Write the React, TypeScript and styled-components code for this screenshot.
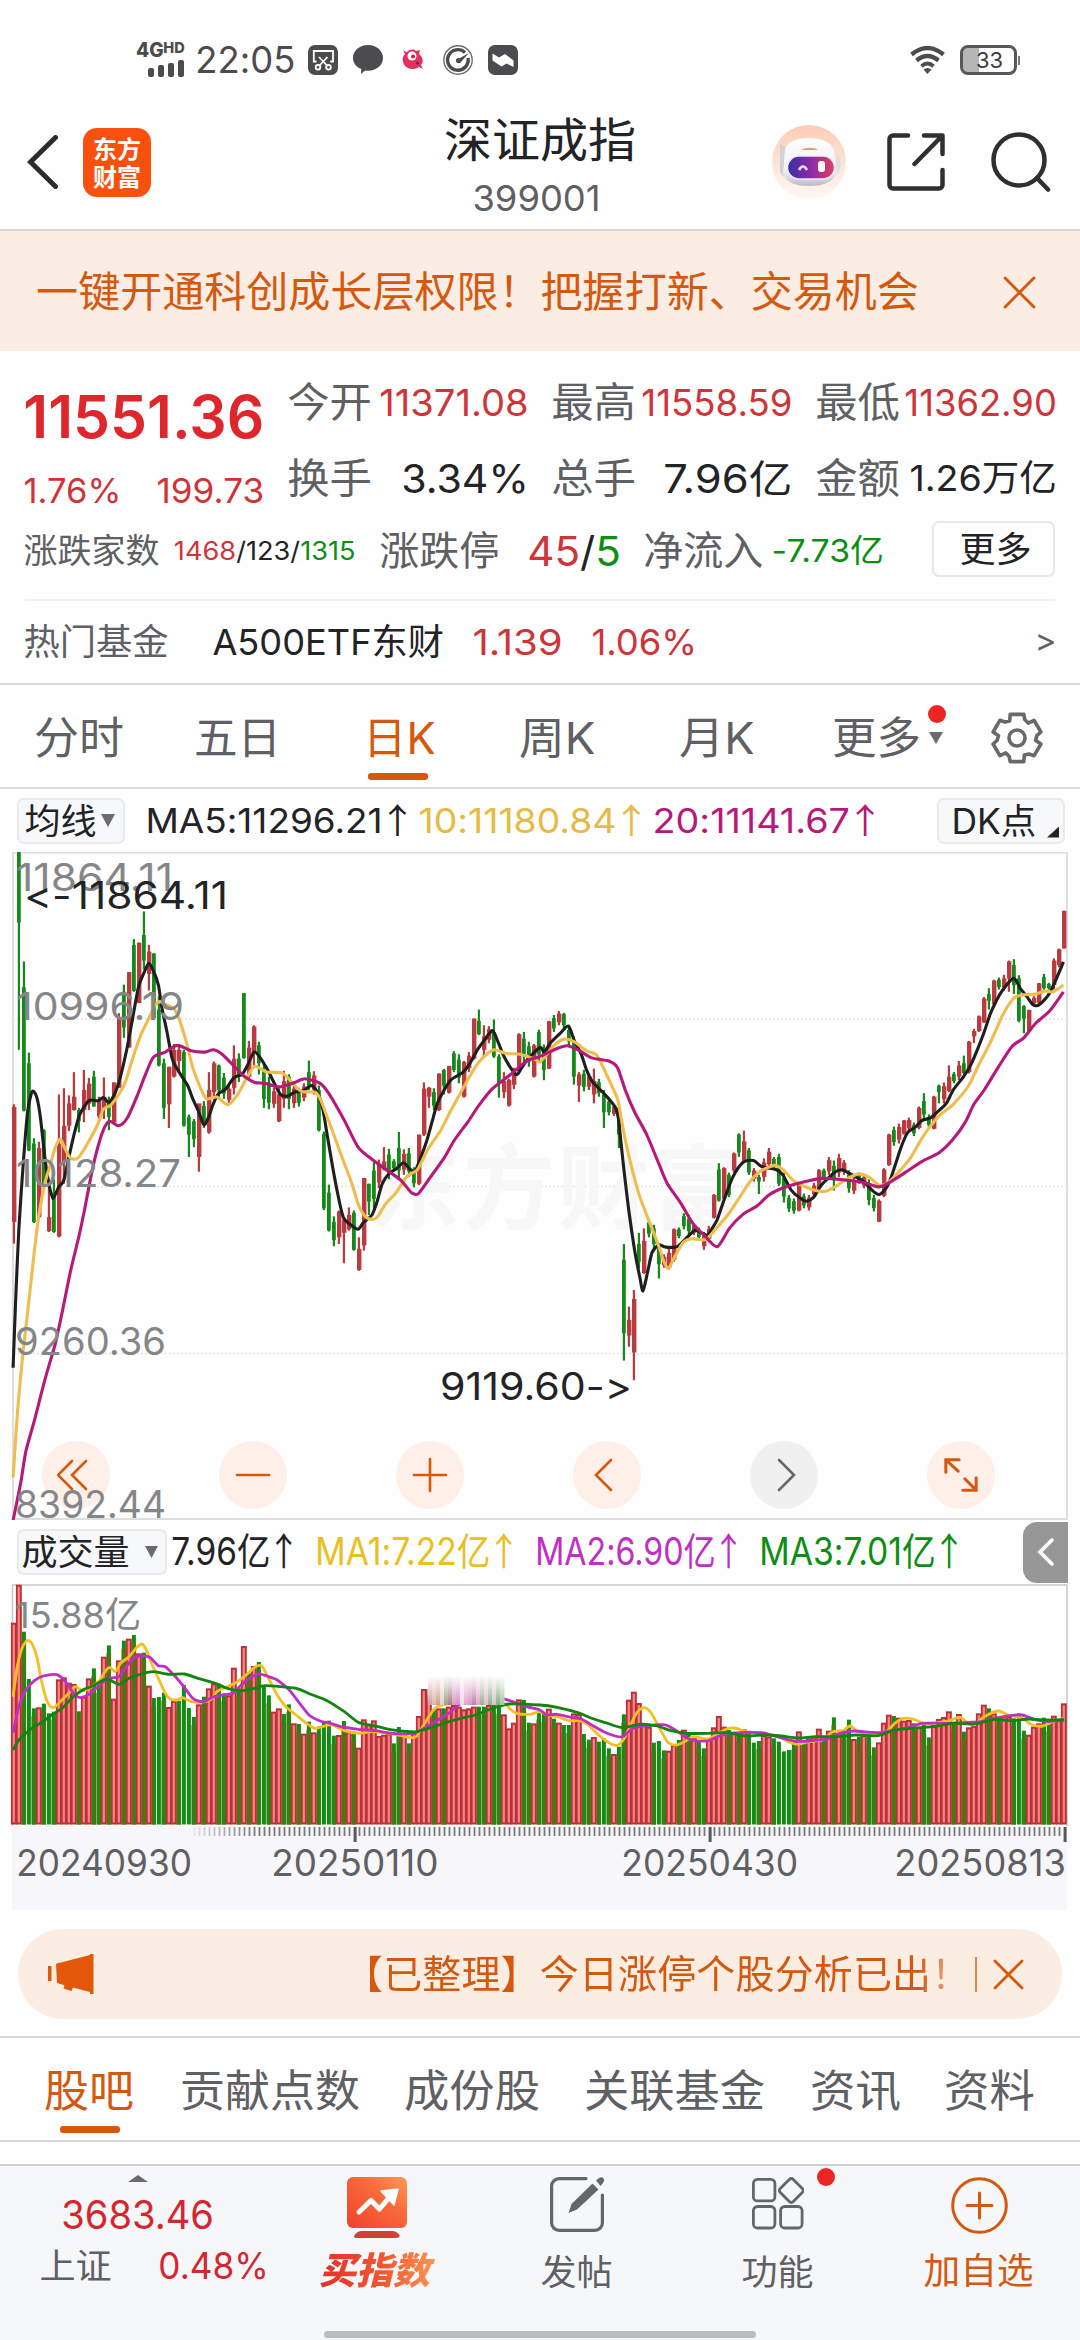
import React, { useLayoutEffect, useRef, useState } from "react";
import styled, { createGlobalStyle, css } from "styled-components";

const INK = "#222326";
const GREY = "#5f6063";
const RED = "#cf3438";
const GREEN = "#0b8f12";
const ORANGE = "#d4590f";
const FONT = `Inter, "Noto Sans CJK SC", sans-serif`;

const Global = createGlobalStyle`
  * { box-sizing: border-box; }
  html, body { margin: 0; padding: 0; background: #fefefe; }
  body { font-family: ${FONT}; color: ${INK}; font-feature-settings: "calt" 0, "liga" 0; }
  svg { display: block; flex: none; }
`;

/* ---------- text that keeps a set ink width ---------- */

const FitBox = styled.span<{ $w: number; $ml: number; $size: number; $color: string; $weight: number; $mt: number }>`
  display: block;
  flex: none;
  width: ${(p) => p.$w}px;
  margin-left: ${(p) => p.$ml}px;
  margin-top: ${(p) => p.$mt}px;
  font-size: ${(p) => p.$size}px;
  line-height: 1.2;
  font-weight: ${(p) => p.$weight};
  color: ${(p) => p.$color};
  white-space: pre;
`;
const FitInner = styled.span`
  display: inline-block;
  transform-origin: 0 50%;
`;
const Arrow = styled.span`
  display: inline-block;
  margin: 0 -0.24em 0 -0.1em;
  font-family: "Noto Sans CJK SC", sans-serif;
  line-height: 1;
`;

type FitProps = {
  w: number;
  size: number;
  ml?: number;
  mt?: number;
  color?: string;
  weight?: number;
  children: React.ReactNode;
};

function Fit({ w, size, ml = 0, mt = 0, color = INK, weight = 400, children }: FitProps) {
  const ref = useRef<HTMLSpanElement>(null);
  const [k, setK] = useState(1);
  const bearing = size * 0.045;
  useLayoutEffect(() => {
    if (ref.current) setK((w + bearing * 2) / ref.current.offsetWidth);
  }, [w, bearing]);
  return (
    <FitBox $w={w} $ml={ml} $mt={mt} $size={size} $color={color} $weight={weight}>
      <FitInner ref={ref} style={{ transform: `translateX(${-bearing}px) scaleX(${k})` }}>
        {children}
      </FitInner>
    </FitBox>
  );
}

/* ---------- layout ---------- */

const Page = styled.div`
  width: 1080px;
  height: 2340px;
  overflow: hidden;
  background: #fefefe;
  display: flex;
  flex-direction: column;
`;

const StatusBar = styled.div`
  height: 104px;
  padding: 16px 60px 0 136px;
  display: flex;
  align-items: center;
  flex: none;
`;
const Spacer = styled.div`
  flex: 1;
`;
const Signal = styled.div`
  width: 48px;
  display: flex;
  flex-direction: column;
  align-items: flex-end;
`;
const SignalLabel = styled.div`
  display: flex;
  align-items: flex-start;
  height: 15px;
  margin-bottom: 2px;
`;
const StatusIcons = styled.div`
  display: flex;
  align-items: center;
  gap: 15px;
  margin-left: 14px;
`;
const Battery = styled.div`
  width: 57px;
  height: 30px;
  margin-left: 15px;
  margin-right: 3px;
  border: 3px solid #56575a;
  border-radius: 8px;
  background: linear-gradient(90deg, #b5b5b6 0 16px, #fefefe 16px);
  background-clip: padding-box;
  display: flex;
  align-items: center;
  position: relative;
  &::after {
    content: "";
    position: absolute;
    right: -6px;
    top: 8px;
    width: 2px;
    height: 9px;
    background: #77787a;
  }
`;

const Header = styled.header`
  height: 127px;
  padding: 0 28px 9px 27px;
  border-bottom: 2px solid #d6d6d6;
  display: flex;
  align-items: center;
  flex: none;
`;
const Logo = styled.div`
  width: 68px;
  height: 69px;
  margin-left: 25px;
  border-radius: 14px;
  background: #f9500d;
  color: #fff;
  font: 700 24px/28px "Noto Sans CJK SC", sans-serif;
  text-align: center;
  white-space: pre-line;
  padding: 6px 0;
`;
const Title = styled.div`
  width: 188px;
  margin: 14px 0 0 295px;
  display: flex;
  flex-direction: column;
`;
const TitleLine = styled.div`
  height: 57px;
  display: flex;
  align-items: center;
`;
const IconSlot = styled.div<{ $ml: number }>`
  margin-left: ${(p) => p.$ml}px;
`;

const Banner = styled.div`
  height: 120px;
  padding: 2px 44px 0 38px;
  background: #fbede3;
  display: flex;
  align-items: center;
  justify-content: space-between;
  flex: none;
`;

const Quote = styled.section`
  height: 334px;
  padding: 21px 25px 0;
  border-bottom: 2px solid #d9d9d9;
  display: flex;
  flex-direction: column;
  flex: none;
`;
const QuoteTop = styled.div`
  display: flex;
  height: 140px;
`;
const PriceCol = styled.div`
  width: 264px;
  padding-top: 5px;
`;
const Stats = styled.div`
  padding-top: 1px;
`;
const Line = styled.div<{ $h: number; $gap?: number }>`
  height: ${(p) => p.$h}px;
  margin-bottom: ${(p) => p.$gap ?? 0}px;
  display: flex;
  align-items: center;
`;
const Breadth = styled.div`
  height: 56px;
  margin-top: 12px;
  display: flex;
  align-items: center;
`;
const MoreButton = styled.button`
  width: 123px;
  height: 56px;
  margin: 0 0 4px auto;
  padding: 0 0 0 27px;
  border: 2px solid #e8e8e9;
  border-radius: 7px;
  background: #fefefe;
  font-family: inherit;
  display: flex;
  align-items: center;
  text-align: left;
`;
const FundRow = styled.div`
  height: 84px;
  margin-top: 20px;
  border-top: 2px solid #f2f2f2;
  display: flex;
  align-items: center;
`;

const Tabs = styled.nav`
  height: 104px;
  padding-top: 4px;
  border-bottom: 2px solid #dcdcdc;
  display: flex;
  align-items: center;
  flex: none;
`;
const Tab = styled.div<{ $ml: number; $active?: boolean; $barLeft?: number }>`
  margin-left: ${(p) => p.$ml}px;
  position: relative;
  ${(p) =>
    p.$active &&
    css`
      &::after {
        content: "";
        position: absolute;
        left: ${p.$barLeft}px;
        top: 61px;
        width: 60px;
        height: 7px;
        border-radius: 3px;
        background: ${ORANGE};
      }
    `}
`;
const Dot = styled.i`
  position: absolute;
  width: 18px;
  height: 18px;
  border-radius: 50%;
  background: #eb2522;
`;
const TabDot = styled(Dot)`
  right: -27px;
  top: -7px;
`;
const Caret = styled.i<{ $w: number; $h: number; $ml?: number; $up?: boolean }>`
  display: block;
  flex: none;
  width: ${(p) => p.$w}px;
  height: ${(p) => p.$h}px;
  margin-left: ${(p) => p.$ml ?? 0}px;
  background: #6b6b6d;
  clip-path: ${(p) => (p.$up ? "polygon(50% 0, 100% 100%, 0 100%)" : "polygon(0 0, 100% 0, 50% 100%)")};
`;

const Legend = styled.div<{ $h: number }>`
  height: ${(p) => p.$h}px;
  padding: 0 12px 0 17px;
  display: flex;
  align-items: center;
  flex: none;
`;
const Chip = styled.div<{ $w: number; $pl: number }>`
  width: ${(p) => p.$w}px;
  height: 46px;
  padding-left: ${(p) => p.$pl}px;
  border: 2px solid #e9eaeb;
  border-radius: 7px;
  background: #f7f8f9;
  display: flex;
  align-items: center;
  flex: none;
  position: relative;
`;
const Corner = styled.i`
  position: absolute;
  right: 4px;
  bottom: 4px;
  width: 12px;
  height: 11px;
  background: #222;
  clip-path: polygon(100% 0, 100% 100%, 0 100%);
`;
const ChipWrap = styled.div`
  margin-left: auto;
  margin-right: 3px;
`;
const Collapse = styled.div`
  width: 45px;
  height: 61px;
  margin-left: auto;
  border-radius: 14px 0 0 14px;
  background: #979797;
  display: flex;
  align-items: center;
  justify-content: center;
`;

const KPanel = styled.section`
  height: 668px;
  position: relative;
  flex: none;
`;
const Controls = styled.div`
  position: absolute;
  left: 42px;
  bottom: 11px;
  display: flex;
  gap: 109px;
`;
const Round = styled.div<{ $grey?: boolean }>`
  width: 68px;
  height: 68px;
  border-radius: 50%;
  background: ${(p) => (p.$grey ? "rgba(236,236,237,.8)" : "rgba(254,236,227,.82)")};
  display: flex;
  align-items: center;
  justify-content: center;
`;
const Labels = styled.svg`
  position: absolute;
  left: 0;
  top: 0;
`;
const Axis = styled.div`
  width: 1055px;
  height: 84px;
  margin-left: 12px;
  background: #f7f7fa;
  flex: none;
`;
const Dates = styled.div`
  height: 40px;
  padding-left: 6px;
  display: flex;
  align-items: center;
`;

const Notice = styled.div`
  width: 1044px;
  height: 90px;
  margin: 19px 0 17px 18px;
  padding: 0 38px 0 30px;
  border-radius: 45px;
  background: #fcede3;
  display: flex;
  align-items: center;
  flex: none;
`;
const NoticeText = styled.div`
  width: 604px;
  margin-left: 250px;
  overflow: hidden;
  -webkit-mask-image: linear-gradient(90deg, #000 0 575px, transparent 635px);
  mask-image: linear-gradient(90deg, #000 0 575px, transparent 635px);
  font-size: 39px;
  line-height: 52px;
  letter-spacing: 0.15px;
  white-space: nowrap;
  color: ${ORANGE};
`;
const NoticeRule = styled.i`
  width: 2px;
  height: 35px;
  margin: 0 16px 0 27px;
  background: #d98550;
`;
const LowerTabs = styled(Tabs)`
  height: 106px;
  border-top: 2px solid #d6d6d6;
  border-bottom-color: #d6d6d6;
`;

const BottomBar = styled.footer`
  height: 177px;
  margin-top: 22px;
  background: #f6f7f9;
  border-top: 2px solid #cfcfd2;
  display: grid;
  grid-template-columns: 279px 196px 204px 196px 205px;
  align-content: start;
  position: relative;
  flex: none;
`;
const IndexCell = styled.div`
  padding-top: 9px;
`;
const NavItem = styled.div<{ $pl: number }>`
  padding: 11px 0 0 ${(p) => p.$pl}px;
  position: relative;
`;
const NavIcon = styled.div<{ $ml: number }>`
  height: 64px;
  margin-left: ${(p) => p.$ml}px;
`;
const NavDot = styled(Dot)`
  left: 138px;
  top: 2px;
`;
const BuyLabel = styled.span`
  display: block;
  width: 124px;
  margin: 5px 0 0 -5px;
  padding: 0 4px;
  font: italic 900 37px/44px "Noto Sans CJK SC", sans-serif;
  white-space: nowrap;
  background: linear-gradient(90deg, #dd3029, #f5562f 55%, #fb9a58);
  -webkit-background-clip: text;
  background-clip: text;
  color: transparent;
`;
const HomeBar = styled.i`
  position: absolute;
  left: 324px;
  bottom: 3px;
  width: 432px;
  height: 7px;
  border-radius: 4px;
  background: #bbbcbd;
`;

/* ---------- chart data ---------- */

const N = 211;
const STEP = 5;
const X0 = 13.8;
const cx = (i: number) => X0 + i * STEP;
// readings are on a 2.904x horizontal grid
const GX = 2.904;
const py = (v: number) => 840 + v / 2.24;
const vy = (v: number) => 1570 + v / 3;

const CANDLES = `r592,904,598,856 g27,470,27,185 g272,608,330,606 g476,697,500,695 g668,858,680,856 r676,846,690,845 g648,780,650,770 r770,878,845,876 g760,880,790,878 r570,890,680,888 r556,770,640,720 r572,652,590,640 r520,606,575,605 g600,655,605,630 r515,632,560,605 r533,605 g517,597,530,597 r575,630 r532,625,575,600 g575,650,585,620 r543,633,543,633 r388,555,400,555 g324,443,340,420 r296,465,296,465 g222,340,235,338 r230,365,230,365 g160,290,213,270 r235,337,250,300 g254,400,254,400 g350,507,380,505 g490,625,500,600 r508,645,508,592 r457,532,470,530 r457,520,470,495 g470,642,475,640 g615,710,620,660 g625,688,630,670 r600,743,590,710 g585,645 r520,658,560,655 r496,575,500,565 g503,580,505,560 g522,580 r550,590 r460,570,490,555 g478,542 g343,490,343,488 r450,535,465,530 r415,505,418,475 g452,525,460,500 g500,600 g530,603 r555,600 r556,632,570,630 r517,600,540,580 g525,603,530,580 r548,600 g555,597 r545,585 g494,560,520,550 r518,570 g550,653,560,650 g653,829,658,825 g772,877,790,875 g843,910 r830,905,832,890 r850,948,850,880 r823,875,840,872 g830,920,835,918 r890,965,916,963 r757,920,757,908 g770,840,770,810 g722,825 r716,780 r688,740,720,738 g692,760 g715,740 g654,760,690,740 r693,750 g690,755 g733,778 r660,773,660,770 r543,663,557,660 r553,600,555,575 g556,605 r523,607,523,605 g513,570,515,550 r506,568,506,566 g473,520,478,515 g480,545 r495,577,497,575 r475,520 r400,492,400,490 g380,437,405,435 r415,485,440,470 r417,455 g402,488,430,485 g480,577,485,545 r520,578,540,565 r535,597,537,595 r510,558 r433,520,435,518 g430,500,445,480 g452,508 r457,532,460,530 g425,500,430,480 g458,538,465,515 r405,513,406,512 g392,430 r383,415 g387,425,390,415 g418,460 g440,548,450,530 r520,587,525,550 g515,563 r523,560 r512,590,540,570 g535,575 g560,645,570,610 g580,617 r593,618 g595,690,600,660 g905,1166,940,1105 r1045,1135,1075,1110 r1008,1210,1028,1148 g880,960,905,945 r870,972,898,970 g850,890 g862,920,870,905 g905,982,910,950 r928,958 r915,962,925,958 r870,945,872,940 g868,892 g836,872 g840,885 r858,885 g868,895 r878,918 r865,900 r793,848,795,846 g724,810,738,808 r733,805,735,803 g745,800,750,795 r700,745,702,740 g657,710,660,700 r651,720,675,718 g690,750,695,745 r735,765 g750,793,755,765 r713,765 r690,735 g710,735 g703,775,710,770 g745,812 g795,833 g803,837 r770,832,772,830 g792,825 r795,830 r768,800 r737,785,740,780 g736,760 r710,750 g718,785,730,760 r703,755 r717,750 g740,790 r755,793 g745,770 r750,780 g760,818 g795,832 r805,856,808,855 r735,800,738,797 r658,730,660,728 g642,685 r635,680 r627,660,628,658 r622,652 g633,663 r597,648,600,645 g567,630,585,615 g615,645 r573,648,575,647 g548,590,550,565 r543,590 r505,565,530,562 g520,545 r495,538,505,530 g483,525,500,522 r450,523,452,520 r423,455,428,440 r393,430,395,428 r352,410,355,408 g332,380,345,360 r313,370,315,368 g308,335 r302,338,310,330 r270,340,272,310 g267,345,280,325 g303,408,310,405 g370,433,372,400 r380,430,381,428 r350,370 r320,370,321,365 g300,340 g320,335 r265,335,270,325 r243,285,245,280 r158,243,159,243`
  .split(" ")
  .map((s) => {
    const v = s.slice(1).split(",").map(Number);
    const [h, l] = v;
    return { up: s[0] === "r", h, l, a: v[2] ?? h + (l - h) * 0.18, b: v[3] ?? l - (l - h) * 0.2 };
  });

const VOLUMES =
  `r158 r44 g185 g327 g415 r412 g401 g430 g425 r328 r322 r338 r342 g424 r380 r325 g295 g345 r260 g226 r386 r271 g212 r206 g195 r250 g248 r347 g384 g381 g368 r411 r393 g392 g345 g414 g441 r403 g380 r355 r340 g341 g370 r376 r293 g355 r228 g310 r288 g276 g345 g376 r425 r415 g432 g403 r460 g462 r491 g455 r487 g470 g455 g452 g497 r495 g453 r485 g485 r533 r448 r462 r451 r498 r494 r490 g520 g471 r490 g520 r490 r438 r357 r357 g420 r415 g415 r410 r405 r410 r418 r415 r410 g410 g410 r405 g405 g408 r433 r475 r458 r388 g390 g458 r460 g425 g432 r416 g446 r458 g465 g465 r430 r432 g492 g509 r501 g515 g505 g535 r552 g530 g433 r389 r365 r399 r460 r470 g518 g513 g541 r542 r525 g510 r479 g490 r500 g510 g535 r505 r472 r438 r470 g480 r485 g490 r478 g490 g518 g513 r495 r500 g505 g515 g544 g540 g515 r484 g510 r505 r500 r476 g500 r482 g442 r490 g485 g449 r507 g500 r495 g500 g532 r517 r458 r434 g438 r443 r452 r450 g460 r470 g465 g502 r465 r447 r441 r424 g455 r432 g485 r472 r468 r430 r404 g415 r430 g440 r445 r440 g445 g430 g482 r494 r470 r460 g443 g460 r437 r450 r400`
    .split(" ")
    .map((s) => ({ up: s[0] === "r", t: Number(s.slice(1)) }));

// "x,y" pairs; the part after "|" belongs to the right half of the panel
function curve(src: string, fy: (v: number) => number) {
  const [l, r = ""] = src.split("|");
  const read = (t: string, off: number) =>
    t
      .trim()
      .split(/\s+/)
      .filter(Boolean)
      .map((p) => {
        const [x, y] = p.split(",").map(Number);
        return [x / GX + off, fy(y)];
      });
  const pts = [...read(l, 0), ...read(r, 540)];
  let d = `M${pts[0][0].toFixed(1)} ${pts[0][1].toFixed(1)}`;
  for (let i = 0; i < pts.length - 1; i++) {
    const p0 = pts[i - 1] ?? pts[i];
    const p1 = pts[i];
    const p2 = pts[i + 1];
    const p3 = pts[i + 2] ?? p2;
    const c = [
      p1[0] + (p2[0] - p0[0]) / 8,
      p1[1] + (p2[1] - p0[1]) / 8,
      p2[0] - (p3[0] - p1[0]) / 8,
      p2[1] - (p3[1] - p1[1]) / 8,
      p2[0],
      p2[1],
    ].map((n) => n.toFixed(1));
    d += `C${c.join(" ")}`;
  }
  return d;
}

const MA5 =
  "38,1182 45,1040 55,870 68,720 80,610 90,570 97,563 108,580 118,625 130,710 142,770 154,803 170,778 185,763 200,710 215,660 230,618 245,597 260,583 285,584 300,577 317,588 335,565 350,530 368,470 385,400 402,330 418,298 432,276 445,292 460,325 470,375 485,430 500,490 520,520 545,550 560,580 575,605 592,638 605,622 620,590 635,568 655,558 680,532 703,525 720,503 738,475 755,487 775,512 800,550 815,570 835,574 855,565 880,562 905,550 925,570 938,605 950,660 965,728 980,790 997,845 1015,860 1040,872 1055,857 1080,840 1095,810 1110,770 1130,747 1150,737 1172,723 1190,737 1205,742 1220,715 1240,672 1255,630 1270,590 1290,560 1310,537 1345,520 1365,500 1385,472 1405,450 1430,427 1445,450 1465,487 1498,525 1515,510 1530,493 1568,465 | 12,475 30,455 60,432 83,417 100,450 120,480 135,515 152,541 180,563 200,580 218,598 228,625 233,660 244,740 258,830 275,920 290,980 299,1010 312,970 325,925 345,907 365,912 400,910 430,888 450,874 470,880 487,885 500,870 515,850 535,805 560,755 590,722 620,718 645,732 685,738 705,750 730,785 755,802 775,809 795,800 815,775 840,755 860,742 880,739 910,752 940,765 965,785 985,794 1005,780 1020,755 1035,720 1050,685 1068,655 1090,643 1110,628 1135,622 1160,605 1180,590 1200,560 1230,530 1250,505 1270,470 1290,430 1310,385 1340,340 1375,310 1395,333 1415,352 1430,368 1445,371 1460,362 1480,343 1500,310 1520,273";
const MA10 =
  "38,1428 50,1290 65,1160 80,1060 100,920 115,830 130,770 145,730 160,690 175,670 188,690 205,713 225,713 240,698 260,672 285,635 300,603 320,595 345,570 365,540 385,490 410,435 435,395 450,370 465,362 480,368 505,378 520,400 540,450 560,510 585,560 600,580 630,576 662,593 690,570 715,535 740,507 775,520 820,522 850,545 875,563 915,565 930,580 950,620 975,672 1000,725 1020,765 1040,815 1060,843 1080,850 1095,845 1120,815 1150,790 1180,755 1210,740 1225,720 1245,690 1280,650 1310,605 1335,570 1360,535 1385,503 1410,482 1435,470 1470,478 1510,480 1550,490 1568,497 | 20,480 45,457 72,446 100,452 135,472 165,482 190,520 225,580 235,620 250,680 270,745 290,800 320,860 345,910 360,945 373,960 390,935 415,902 440,893 480,895 510,872 550,835 580,800 610,765 640,742 680,729 705,738 735,762 765,775 800,785 830,787 860,775 885,762 925,748 955,755 985,773 1010,768 1040,745 1075,713 1100,680 1125,650 1160,617 1200,592 1245,550 1270,510 1310,450 1345,390 1375,355 1400,347 1440,345 1465,338 1490,340 1520,325";
const MA20 =
  "38,1524 60,1440 75,1370 100,1300 130,1210 160,1130 180,1060 205,965 230,885 245,830 265,750 280,700 300,650 318,630 345,640 370,622 400,570 420,530 445,487 480,475 515,460 555,472 595,475 620,470 645,480 680,507 710,530 740,543 770,545 810,553 850,545 885,535 930,545 955,568 1000,628 1040,688 1080,715 1130,743 1165,763 1195,790 1215,792 1250,755 1290,712 1320,672 1360,630 1390,595 1430,557 1480,527 1530,495 1568,485 | 50,467 80,461 115,472 150,488 200,495 225,510 250,565 275,610 310,660 345,725 370,770 410,815 445,860 480,888 515,911 550,870 590,838 630,820 665,795 710,778 760,767 820,758 890,762 940,767 985,777 1020,765 1060,745 1110,720 1160,700 1200,670 1235,632 1260,592 1290,560 1330,510 1370,463 1405,443 1440,410 1480,383 1520,340";
const VMA1 =
  "38,380 50,290 62,240 75,215 85,212 95,225 108,265 120,330 132,380 145,408 158,412 175,395 200,370 218,350 240,362 265,352 290,330 305,305 318,292 335,305 350,280 375,260 395,235 412,222 425,240 440,280 460,325 480,370 495,388 515,390 530,383 555,395 580,397 610,390 630,365 660,350 690,335 720,310 745,288 762,290 780,325 805,375 830,410 860,435 890,460 915,475 935,470 965,465 1000,482 1040,490 1080,485 1130,490 1165,497 1205,502 1225,475 1245,440 1270,410 1330,398 1400,395 1463,400 1480,415 1500,430 1540,433 1568,425 | 20,435 50,440 85,452 115,452 140,465 170,495 200,518 225,526 245,505 265,460 280,430 300,413 320,425 345,470 370,515 395,525 420,515 445,500 485,507 510,495 540,478 565,474 600,485 650,490 690,498 720,515 750,523 780,515 820,510 850,485 880,482 900,468 925,485 960,490 1000,490 1030,460 1055,445 1085,448 1120,462 1160,457 1190,452 1220,442 1255,465 1290,440 1330,423 1360,435 1400,445 1430,465 1460,468 1490,455 1522,445";
const VMA2 =
  "38,488 55,410 75,360 100,332 125,318 165,314 190,335 215,372 235,383 265,368 295,340 315,325 345,320 370,285 390,262 415,258 435,262 460,287 480,290 505,315 530,345 560,385 590,395 620,380 650,375 680,368 700,345 725,325 750,312 775,318 805,330 840,360 870,400 900,437 930,453 960,460 990,470 1040,478 1090,482 1140,490 1200,490 1240,470 1280,445 1310,425 1340,400 1400,388 1455,385 1480,392 1530,410 1568,420 | 20,435 50,433 90,442 120,447 150,465 185,485 215,497 240,500 270,475 310,467 360,464 385,475 410,492 440,510 485,513 520,498 560,490 600,487 645,488 680,498 740,513 790,512 840,505 870,490 910,483 960,487 990,488 1020,482 1060,475 1110,460 1160,460 1200,460 1230,458 1280,455 1320,445 1360,438 1400,435 1440,450 1480,455 1522,448";
const VMA3 =
  "38,540 55,510 90,477 120,458 150,435 180,415 210,383 240,360 270,348 310,327 345,343 375,325 410,312 445,305 490,313 535,312 575,325 620,338 660,355 700,362 740,355 770,347 860,355 900,372 950,392 1000,425 1040,457 1080,466 1130,478 1175,484 1210,485 1260,470 1320,450 1380,435 1430,415 1480,402 1568,405 | 50,412 110,428 150,445 190,458 240,473 290,463 340,468 380,482 430,490 490,490 540,488 600,498 650,495 700,498 750,504 800,500 860,500 920,495 980,497 1030,480 1080,475 1140,470 1200,460 1260,462 1320,448 1370,452 1420,447 1470,450 1522,450";

const CANDLE_RED = "#b93a3f";
const CANDLE_GREEN = "#16891b";

function KLine() {
  return (
    <svg width="1080" height="668" viewBox="0 852 1080 668">
      <rect x="13" y="852.5" width="1054" height="666.5" fill="none" stroke="#dddee0" strokeWidth="2" />
      {[1019, 1186.5, 1353.5].map((y) => (
        <line key={y} x1="13" x2="1067" y1={y} y2={y} stroke="#e2e3e3" strokeWidth="1.5" strokeDasharray="2 2" />
      ))}
      <text
        x="368"
        y="1222"
        textLength="376"
        fontSize="92"
        fontWeight="700"
        fill="#f7f7f8"
        fontFamily={`"Noto Sans CJK SC", sans-serif`}
      >
        东方财富
      </text>
      {CANDLES.map((c, i) => {
        const col = c.up ? CANDLE_RED : CANDLE_GREEN;
        return (
          <g key={i} fill={col}>
            <rect x={cx(i) - 1} y={py(c.h)} width="2.2" height={(c.l - c.h) / 2.24} />
            <rect x={cx(i) - 1.8} y={py(c.a)} width={c.up ? 4.4 : 3.8} height={Math.max(2, (c.b - c.a) / 2.24)} />
          </g>
        );
      })}
      <g fill="none" strokeWidth="3.1" strokeLinejoin="round">
        <path d={curve(MA5, py)} stroke="#1f1f20" />
        <path d={curve(MA10, py)} stroke="#eebd4d" />
        <path d={curve(MA20, py)} stroke="#b5197a" />
      </g>
    </svg>
  );
}

const PRICE_LABELS: [string, number, number, number, string][] = [
  ["11864.11", 16, 157, 891, "#858687"],
  ["10996.19", 16, 168, 1019.5, "#858687"],
  ["10128.27", 16, 165, 1187, "#858687"],
  ["9260.36", 15, 151, 1355, "#858687"],
  ["8392.44", 15, 151, 1517.5, "#858687"],
  ["<-11864.11", 24, 204, 909, INK],
  ["9119.60->", 440, 192, 1400, INK],
];

function PriceLabels() {
  return (
    <Labels width="1080" height="668" viewBox="0 852 1080 668">
      {PRICE_LABELS.map(([t, x, w, y, fill]) => (
        <text key={t} x={x} y={y} textLength={w} lengthAdjust="spacingAndGlyphs" fontSize="38.5" fill={fill} fontFamily={FONT}>
          {t}
        </text>
      ))}
    </Labels>
  );
}

const SMEAR = ["#c9a0a4", "#e6b2ae", "#caa27b", "#efc9cf", "#8fa87e", "#b0758f", "#cfa2b4", "#d98ad0", "#efd9e4", "#e7a0c6", "#d994cf", "#b58a9e", "#e9a7c9", "#9fae90", "#e8b7c8", "#86b589", "#d9c2cc", "#7fb384", "#a6c7a4"];

function Volume() {
  const base = 1824.5;
  return (
    <svg width="1080" height="242" viewBox="0 1584 1080 242">
      <defs>
        <linearGradient id="fade" x1="0" x2="0" y1="0" y2="1">
          <stop offset="0" stopColor="#fefefe" stopOpacity="1" />
          <stop offset="0.4" stopColor="#fefefe" stopOpacity="0.62" />
          <stop offset="1" stopColor="#fefefe" stopOpacity="0" />
        </linearGradient>
      </defs>
      <path d="M12.5 1826V1585H1067V1826" fill="none" stroke="#cccac9" strokeWidth="1.6" />
      {VOLUMES.map((v, i) => {
        const y = vy(v.t);
        if (v.up) return null;
        const near = Number(VOLUMES[i - 1]?.up ?? false) + Number(VOLUMES[i + 1]?.up ?? false);
        return (
          <g key={i}>
            <rect x={cx(i) - 1.9} y={y} width="4" height={base - y} fill="#138c14" />
            {near > 0 && (
              <rect
                x={cx(i) - 2.3}
                y={y + 8}
                width="4.6"
                height={base - y - 8}
                fill={near === 2 ? "#4d7611" : "#327f12"}
              />
            )}
          </g>
        );
      })}
      {VOLUMES.map((v, i) => {
        const y = vy(v.t);
        if (!v.up) return null;
        return (
          <g key={i}>
            <rect x={cx(i) - 2.9} y={y} width="5.9" height={base - y} fill="#b8323a" />
            <rect x={cx(i) - 1.1} y={y + 2} width="2.2" height={base - y - 4} fill="#f98480" />
          </g>
        );
      })}
      <g fill="none" strokeWidth="2.8" strokeLinejoin="round">
        <path d={curve(VMA1, vy)} stroke="#f2c021" />
        <path d={curve(VMA2, vy)} stroke="#c02fc4" />
        <path d={curve(VMA3, vy)} stroke="#11850f" />
      </g>
      {SMEAR.map((c, i) => (
        <rect key={i} x={428 + i * 4} y="1677" width="4.4" height="28" fill={c} />
      ))}
      <rect x="427" y="1676" width="78" height="29" fill="url(#fade)" />
      <text x="15" y="1628" textLength="126" lengthAdjust="spacingAndGlyphs" fontSize="36" fill="#858687" fontFamily={FONT}>
        15.88亿
      </text>
    </svg>
  );
}

function Ticks() {
  const out = [];
  for (let i = 36; i < N; i++) {
    const major = i === 68 || i === 139 || i === 210;
    out.push(
      <rect
        key={i}
        x={cx(i) - 12.2}
        y="1"
        width={major ? 3 : 1.8}
        height={major ? 15 : 9}
        fill={major ? "#58595b" : "#77787b"}
        opacity={major ? 1 : Math.min(1, (i - 34) / 14)}
      />
    );
  }
  return (
    <svg width="1055" height="17" viewBox="0 0 1055 17">
      {out}
    </svg>
  );
}

/* ---------- icons ---------- */

const Cross = ({ size }: { size: number }) => (
  <svg width={size} height={size} viewBox="0 0 32 32" stroke={ORANGE} strokeWidth="2.8" strokeLinecap="round">
    <path d="M2 2L30 30M30 2L2 30" />
  </svg>
);

const SignalBars = () => (
  <svg width="36" height="17" viewBox="0 0 36 17" fill="#4c4c4e">
    <rect x="0" y="8" width="6" height="9" rx="2" />
    <rect x="10" y="5" width="6" height="12" rx="2" />
    <rect x="20" y="3" width="6" height="14" rx="2" />
    <rect x="30" y="0" width="6" height="17" rx="2" />
  </svg>
);

const ScissorsIcon = () => (
  <svg width="30" height="30" viewBox="0 0 30 30">
    <rect width="30" height="30" rx="7" fill="#4c4c4e" />
    <g fill="none" stroke="#fff" strokeWidth="1.8">
      <path d="M8.500 16.500H5.800V6H25v10.500h-2.800" />
      <path d="M11 12l8.500 9M19.500 12L11 21" />
      <circle cx="10" cy="22.300" r="2.300" />
      <circle cx="20.500" cy="22.300" r="2.300" />
    </g>
  </svg>
);
const ChatIcon = () => (
  <svg width="30" height="30" viewBox="0 0 30 30" fill="#4c4c4e">
    <path d="M15 0c8.500 0 15 5.800 15 13s-6.500 12.700-15 12.700c-1 0-2 0-2.900-.3L8 29l.3-5C3.400 22 0 18 0 13 0 5.800 6.500 0 15 0z" />
  </svg>
);
const BirdIcon = () => (
  <svg width="30" height="30" viewBox="0 0 30 30">
    <path d="M5 5q2 2 4 2c3-3 7-3 9-1l4-1-1 4c4 3 5 8 2 11l2 4-4-2c-6 4-14 2-16-5-1-4 0-6 2-8z" fill="#e3315f" />
    <circle cx="14" cy="11" r="4.500" fill="#fff" />
    <circle cx="15" cy="11.500" r="2" fill="#c02345" />
    <circle cx="19.500" cy="18" r="1.500" fill="#5c2a6a" />
  </svg>
);
const GaugeIcon = () => (
  <svg width="30" height="30" viewBox="0 0 30 30" fill="none">
    <circle cx="15" cy="15" r="14.200" stroke="#6b6b6d" strokeWidth="1.400" />
    <path d="M22 7.500A10.300 10.300 0 1 0 25 13" stroke="#4c4c4e" strokeWidth="3.400" />
    <path d="M13.500 15L26 8l-9 10z" fill="#4c4c4e" />
    <circle cx="15.500" cy="15.500" r="2.600" fill="#4c4c4e" />
  </svg>
);
const FlashIcon = () => (
  <svg width="30" height="30" viewBox="0 0 30 30">
    <rect width="30" height="30" rx="7" fill="#4c4c4e" />
    <path d="M4.500 8.500l6.500 4 6-3.500 8.500 6.500V22l-7-3.500-5 3-9-6z" fill="#fff" />
  </svg>
);
const WifiIcon = () => (
  <svg width="35" height="28" viewBox="0 0 35 28" fill="none" stroke="#4c4c4e">
    <path d="M1.500 8.500Q17.500-4.500 33.500 8.500" strokeWidth="4.200" />
    <path d="M6.500 14.500Q17.500 5.500 28.500 14.500" strokeWidth="4.200" />
    <path d="M11.500 20.200Q17.500 15 23.500 20.200" strokeWidth="3.800" />
    <path d="M13.500 23.500q4-3 8 0L17.500 28z" fill="#4c4c4e" stroke="none" />
  </svg>
);

const Robot = () => (
  <svg width="74" height="74" viewBox="0 0 74 74">
    <defs>
      <linearGradient id="halo" x1="0" x2="0" y1="0" y2="1">
        <stop offset="0" stopColor="#fdccb3" />
        <stop offset="0.6" stopColor="#fde8df" />
        <stop offset="1" stopColor="#fff8f5" />
      </linearGradient>
      <linearGradient id="visor" x1="0" x2="1" y1="0" y2="0">
        <stop offset="0" stopColor="#3a2fa4" />
        <stop offset="0.5" stopColor="#8a2aa6" />
        <stop offset="1" stopColor="#e23f62" />
      </linearGradient>
      <linearGradient id="shell" x1="0" x2="0" y1="0" y2="1">
        <stop offset="0" stopColor="#fff" />
        <stop offset="0.7" stopColor="#f1eef0" />
        <stop offset="1" stopColor="#b9bbc9" />
      </linearGradient>
    </defs>
    <circle cx="37" cy="37" r="37" fill="url(#halo)" />
    <path d="M8 19l6 3-2 30-4-4z" fill="#d2d2da" />
    <path d="M66 28l3 12-3 9-4-2z" fill="#dcdce2" />
    <path d="M13 24c3-8 13-11 24-11s21 3 25 12l3 23c-4 10-15 13-28 13S15 58 11 49z" fill="url(#shell)" />
    <path d="M29 25c5-3 13-3 17 0z" fill="#d7a276" />
    <rect x="15.500" y="31" width="47" height="23" rx="11.500" fill="url(#visor)" stroke="#efeaf5" strokeWidth="1.500" />
    <path d="M27 45q4-7 8 0" fill="none" stroke="#e9dcfb" strokeWidth="2.600" />
    <rect x="46" y="36" width="7" height="11" rx="3" fill="#fff" />
  </svg>
);

const ShareIcon = () => (
  <svg width="58" height="58" viewBox="0 0 58 58" fill="none" stroke="#2e2f31" strokeWidth="4.500" strokeLinecap="round" strokeLinejoin="round">
    <path d="M21 2.500H6a3.500 3.500 0 0 0-3.500 3.500v46A3.500 3.500 0 0 0 6 55.500h46a3.500 3.500 0 0 0 3.500-3.500V37" />
    <path d="M37 2.500h18.500V21M55 3L27.500 31" />
  </svg>
);
const SearchIcon = () => (
  <svg width="60" height="60" viewBox="0 0 60 60" fill="none" stroke="#2e2f31" strokeWidth="4.500" strokeLinecap="round">
    <circle cx="28" cy="28" r="25.500" />
    <path d="M46 46L57 57.500" />
  </svg>
);

const gearPath =
  [0, 60, 120, 180, 240, 300]
    .flatMap((a) =>
      [
        [24.6, -16],
        [24.6, 16],
        [20, 23],
        [18.6, 37],
      ].map(([r, t]) => {
        const rad = ((a + t - 90) * Math.PI) / 180;
        return `${(26 + r * Math.cos(rad)).toFixed(1)} ${(26 + r * Math.sin(rad)).toFixed(1)}`;
      })
    )
    .reduce((d, p, i) => d + (i ? "L" : "M") + p, "") + "Z";

const Gear = () => (
  <svg width="52" height="52" viewBox="0 0 52 52" fill="none" stroke="#68696b" strokeWidth="3.600" strokeLinejoin="round">
    <path d={gearPath} />
    <circle cx="26" cy="26" r="8" />
  </svg>
);

const Horn = () => (
  <svg width="46" height="40" viewBox="0 0 46 40" fill="#e4560a">
    <rect x="0" y="12" width="3.500" height="15" />
    <path d="M8 10q2-1.500 5-1.500L42 1V0h3.500v40H42v-2l-17-4.500-1.500 3.500-8-2.500 1-3.200L9 29z" />
  </svg>
);

const BuyIcon = () => (
  <svg width="60" height="61" viewBox="0 0 60 61">
    <defs>
      <linearGradient id="buy" x1="0" x2="1" y1="1" y2="0">
        <stop offset="0" stopColor="#f0412c" />
        <stop offset="0.6" stopColor="#fa6a3a" />
        <stop offset="1" stopColor="#fd9a55" />
      </linearGradient>
    </defs>
    <rect width="60" height="51" rx="6" fill="url(#buy)" />
    <path d="M7 59q3-5 8-5h30q5 0 8 5-1 2-4 2H10q-3 0-3-2z" fill="#cf4139" />
    <path d="M12 35L24 23.500L32.500 32L43 19.500" fill="none" stroke="#fff" strokeWidth="5" strokeLinecap="round" strokeLinejoin="round" />
    <path d="M34 14l17-2-4 16z" fill="#fff" strokeLinejoin="round" stroke="#fff" strokeWidth="1.500" />
  </svg>
);
const PostIcon = () => (
  <svg width="55" height="55" viewBox="0 0 55 55" fill="none" stroke="#65666a" strokeWidth="3.200" strokeLinecap="round">
    <path d="M36 1.600H9A7.400 7.400 0 0 0 1.600 9v37A7.400 7.400 0 0 0 9 53.400h36a7.400 7.400 0 0 0 7.400-7.400V18" />
    <path d="M18.500 36l3-9L42.500 6.500l6 6L27 32.500z" fill="#65666a" stroke="none" />
    <path d="M46 3.500l3-2.500q3-1.500 4.500.5t-.5 4.500l-2.500 3z" fill="#65666a" stroke="none" />
  </svg>
);
const AppsIcon = () => (
  <svg width="52" height="53" viewBox="0 0 52 53" fill="none" stroke="#65666a" strokeWidth="2.800" strokeLinejoin="round">
    <rect x="1.400" y="2.400" width="21.500" height="21.500" rx="4" />
    <rect x="1.400" y="29.500" width="21.500" height="21.500" rx="4" />
    <rect x="28.600" y="29.500" width="21.500" height="21.500" rx="4" />
    <path d="M37.300 2.400q2-2 4 0l9 9q2 2 0 4l-9 9q-2 2-4 0l-9-9q-2-2 0-4z" />
  </svg>
);
const AddIcon = () => (
  <svg width="57" height="57" viewBox="0 0 57 57" fill="none" stroke={ORANGE} strokeWidth="3" strokeLinecap="round">
    <circle cx="28.500" cy="28.500" r="26.800" />
    <path d="M28.500 16v25M16 28.500h25" />
  </svg>
);

const Stroke = ({ d, color = ORANGE, size = 38, width = 2.6 }: { d: string; color?: string; size?: number; width?: number }) => (
  <svg width={size} height={size} viewBox="0 0 38 38" fill="none" stroke={color} strokeWidth={width} strokeLinecap="round">
    <path d={d} />
  </svg>
);

/* ---------- page ---------- */

const STATS_1: [string, number, string, number, number, string, number][] = [
  ["今开", 0, "11371.08", 11, 146, RED, 37],
  ["最高", 26, "11558.59", 9, 148, RED, 37],
  ["最低", 26, "11362.90", 8, 149, RED, 37],
];
const STATS_2: [string, number, string, number, number, string, number][] = [
  ["换手", 0, "3.34%", 33, 124, INK, 39],
  ["总手", 26, "7.96亿", 31, 126, INK, 39],
  ["金额", 26, "1.26万亿", 13, 144, INK, 36],
];

const LOWER: [string, number, number][] = [
  ["股吧", 46, 86],
  ["贡献点数", 50, 176],
  ["成份股", 48, 132],
  ["关联基金", 48, 177],
  ["资讯", 49, 87],
  ["资料", 47, 87],
];

const StatLine = ({ rows, gap }: { rows: typeof STATS_1; gap?: number }) => (
  <Line $h={60} $gap={gap}>
    {rows.map(([label, ml, value, vml, vw, color, size]) => (
      <React.Fragment key={label}>
        <Fit w={81} size={41} ml={ml} color={GREY}>
          {label}
        </Fit>
        <Fit w={vw} size={size} ml={vml} color={color}>
          {value}
        </Fit>
      </React.Fragment>
    ))}
  </Line>
);

const Tint = styled.span<{ $c: string }>`
  color: ${(p) => p.$c};
`;

export default function App() {
  return (
    <Page>
      <Global />
      <StatusBar>
        <Signal>
          <SignalLabel>
            <Fit w={26} size={20} weight={800} color="#4c4c4e" mt={-5}>
              4G
            </Fit>
            <Fit w={20} size={15} weight={800} color="#4c4c4e" ml={1} mt={-4}>
              HD
            </Fit>
          </SignalLabel>
          <SignalBars />
        </Signal>
        <Fit w={97} size={37} ml={13} color="#4c4c4e">
          22:05
        </Fit>
        <StatusIcons>
          <ScissorsIcon />
          <ChatIcon />
          <BirdIcon />
          <GaugeIcon />
          <FlashIcon />
        </StatusIcons>
        <Spacer />
        <WifiIcon />
        <Battery>
          <Fit w={25} size={22} ml={14} color="#3c3c3e">
            33
          </Fit>
        </Battery>
      </StatusBar>

      <Header>
        <svg width="31" height="54" viewBox="0 0 31 54" fill="none" stroke="#2b2c2e" strokeWidth="5" strokeLinecap="round">
          <path d="M28.500 2.500L3.500 27L28.500 51.500" />
        </svg>
        <Logo>{"东方\n财富"}</Logo>
        <Title>
          <TitleLine>
            <Fit w={188} size={47}>
              深证成指
            </Fit>
          </TitleLine>
          <TitleLine>
            <Fit w={125} size={36} ml={28} mt={2} color={GREY}>
              399001
            </Fit>
          </TitleLine>
        </Title>
        <IconSlot $ml={138}>
          <Robot />
        </IconSlot>
        <IconSlot $ml={41}>
          <ShareIcon />
        </IconSlot>
        <IconSlot $ml={46}>
          <SearchIcon />
        </IconSlot>
      </Header>

      <Banner>
        <Fit w={879} size={42} color={ORANGE}>
          一键开通科创成长层权限！把握打新、交易机会
        </Fit>
        <Cross size={33} />
      </Banner>

      <Quote>
        <QuoteTop>
          <PriceCol>
            <Line $h={80} $gap={14}>
              <Fit w={236} size={59} weight={600} color="#dd272c" ml={1}>
                11551.36
              </Fit>
            </Line>
            <Line $h={40}>
              <Fit w={95} size={34.500} color={RED}>
                1.76%
              </Fit>
              <Fit w={105} size={34.500} color={RED} ml={38}>
                199.73
              </Fit>
            </Line>
          </PriceCol>
          <Stats>
            <StatLine rows={STATS_1} gap={16} />
            <StatLine rows={STATS_2} />
          </Stats>
        </QuoteTop>
        <Breadth>
          <Fit w={133} size={34} color={GREY}>
            涨跌家数
          </Fit>
          <Fit w={180} size={25.500} ml={17}>
            <Tint $c={RED}>1468</Tint>/123/<Tint $c={GREEN}>1315</Tint>
          </Fit>
          <Fit w={117} size={39.500} ml={26} color={GREY}>
            涨跌停
          </Fit>
          <Fit w={90} size={41} ml={31}>
            <Tint $c={RED}>45</Tint>/<Tint $c={GREEN}>5</Tint>
          </Fit>
          <Fit w={117} size={39.500} ml={26} color={GREY}>
            净流入
          </Fit>
          <Fit w={110} size={31.500} ml={11} color={GREEN}>
            -7.73亿
          </Fit>
          <MoreButton>
            <Fit w={69} size={35}>
              更多
            </Fit>
          </MoreButton>
        </Breadth>
        <FundRow>
          <Fit w={142} size={36} color={GREY}>
            热门基金
          </Fit>
          <Fit w={228} size={36} ml={47}>
            A500ETF东财
          </Fit>
          <Fit w={87} size={36} ml={32} color={RED}>
            1.139
          </Fit>
          <Fit w={102} size={36} ml={32} color={RED}>
            1.06%
          </Fit>
          <Spacer />
          <Fit w={19} size={32} mt={-2} color={GREY}>
            {">"}
          </Fit>
        </FundRow>
      </Quote>

      <Tabs>
        <Tab $ml={36}>
          <Fit w={86} size={44} color={GREY}>
            分时
          </Fit>
        </Tab>
        <Tab $ml={74}>
          <Fit w={83} size={44} color={GREY}>
            五日
          </Fit>
        </Tab>
        <Tab $ml={86} $active $barLeft={3}>
          <Fit w={69} size={44} color={ORANGE}>
            日K
          </Fit>
        </Tab>
        <Tab $ml={87}>
          <Fit w={73} size={44} color={GREY}>
            周K
          </Fit>
        </Tab>
        <Tab $ml={87}>
          <Fit w={72} size={44} color={GREY}>
            月K
          </Fit>
        </Tab>
        <Tab $ml={81}>
          <Fit w={85} size={44} color={GREY}>
            更多
          </Fit>
          <TabDot />
        </Tab>
        <Caret $w={14} $h={12} $ml={10} />
        <IconSlot $ml={48}>
          <Gear />
        </IconSlot>
      </Tabs>

      <Legend $h={63}>
        <Chip $w={108} $pl={7}>
          <Fit w={69} size={35}>
            均线
          </Fit>
          <Caret $w={14} $h={13} $ml={6} />
        </Chip>
        <Fit w={258} size={34.500} ml={22}>
          MA5:11296.21<Arrow>↑</Arrow>
        </Fit>
        <Fit w={220} size={34.500} ml={15} color="#e5bb45">
          10:11180.84<Arrow>↑</Arrow>
        </Fit>
        <Fit w={219} size={34.500} ml={14} color="#b8187a">
          20:11141.67<Arrow>↑</Arrow>
        </Fit>
        <ChipWrap>
          <Chip $w={128} $pl={14}>
            <Fit w={82} size={35}>
              DK点
            </Fit>
            <Corner />
          </Chip>
        </ChipWrap>
      </Legend>

      <KPanel>
        <KLine />
        <Controls>
          <Round>
            <Stroke d="M15 5L1 19L15 33M29 5L15 19L29 33" />
          </Round>
          <Round>
            <Stroke d="M3 19H35" />
          </Round>
          <Round>
            <Stroke d="M3 19H35M19 3V35" />
          </Round>
          <Round>
            <Stroke d="M23 4L8 19L23 34" />
          </Round>
          <Round $grey>
            <Stroke d="M14 4L29 19L14 34" color="#66676a" />
          </Round>
          <Round>
            <Stroke d="M3 16V3H17M3 3L16 15M35 22V35H21M35 35L23 23" size={36} width={3.2} />
          </Round>
        </Controls>
        <PriceLabels />
      </KPanel>

      <Legend $h={64}>
        <Chip $w={150} $pl={4}>
          <Fit w={105} size={35}>
            成交量
          </Fit>
          <Caret $w={13} $h={12} $ml={17} />
        </Chip>
        <Fit w={118} size={38} ml={6}>
          7.96亿<Arrow>↑</Arrow>
        </Fit>
        <Fit w={194} size={38} ml={26} color="#e8c022">
          MA1:7.22亿<Arrow>↑</Arrow>
        </Fit>
        <Fit w={198} size={38} ml={26} color="#c02fc4">
          MA2:6.90亿<Arrow>↑</Arrow>
        </Fit>
        <Fit w={195} size={38} ml={26} color={GREEN}>
          MA3:7.01亿<Arrow>↑</Arrow>
        </Fit>
        <Collapse>
          <svg width="18" height="28" viewBox="0 0 18 28" fill="none" stroke="#fff" strokeWidth="3.600" strokeLinecap="round">
            <path d="M15 2L3 14L15 26" />
          </svg>
        </Collapse>
      </Legend>

      <Volume />
      <Axis>
        <Ticks />
        <Dates>
          <Fit w={172} size={37} color={GREY}>
            20240930
          </Fit>
          <Fit w={164} size={37} ml={83} color={GREY}>
            20250110
          </Fit>
          <Fit w={173} size={37} ml={186} color={GREY}>
            20250430
          </Fit>
          <Fit w={168} size={37} ml={100} color={GREY}>
            20250813
          </Fit>
        </Dates>
      </Axis>

      <Notice>
        <Horn />
        <NoticeText>【已整理】今日涨停个股分析已出！</NoticeText>
        <NoticeRule />
        <Cross size={31} />
      </Notice>

      <LowerTabs>
        {LOWER.map(([t, ml, w], i) => (
          <Tab key={t} $ml={ml} $active={i === 0} $barLeft={14}>
            <Fit w={w} size={44} color={i === 0 ? ORANGE : GREY}>
              {t}
            </Fit>
          </Tab>
        ))}
      </LowerTabs>

      <BottomBar>
        <IndexCell>
          <Caret $w={20} $h={7} $ml={128} $up />
          <Line $h={64}>
            <Fit w={149} size={39} ml={63} mt={2} color="#d5262f">
              3683.46
            </Fit>
          </Line>
          <Line $h={40}>
            <Fit w={69} size={35} ml={41} color={GREY}>
              上证
            </Fit>
            <Fit w={107} size={37} ml={50} color="#d5262f">
              0.48%
            </Fit>
          </Line>
        </IndexCell>
        <NavItem $pl={41}>
          <NavIcon $ml={27}>
            <BuyIcon />
          </NavIcon>
          <BuyLabel>买指数</BuyLabel>
        </NavItem>
        <NavItem $pl={67}>
          <NavIcon $ml={8}>
            <PostIcon />
          </NavIcon>
          <Fit w={69} size={35} color={GREY} mt={10}>
            发帖
          </Fit>
        </NavItem>
        <NavItem $pl={64}>
          <NavDot />
          <NavIcon $ml={9}>
            <AppsIcon />
          </NavIcon>
          <Fit w={69} size={35} color={GREY} mt={10}>
            功能
          </Fit>
        </NavItem>
        <NavItem $pl={50}>
          <NavIcon $ml={26}>
            <AddIcon />
          </NavIcon>
          <Fit w={107} size={36} color={ORANGE} mt={9}>
            加自选
          </Fit>
        </NavItem>
        <HomeBar />
      </BottomBar>
    </Page>
  );
}
